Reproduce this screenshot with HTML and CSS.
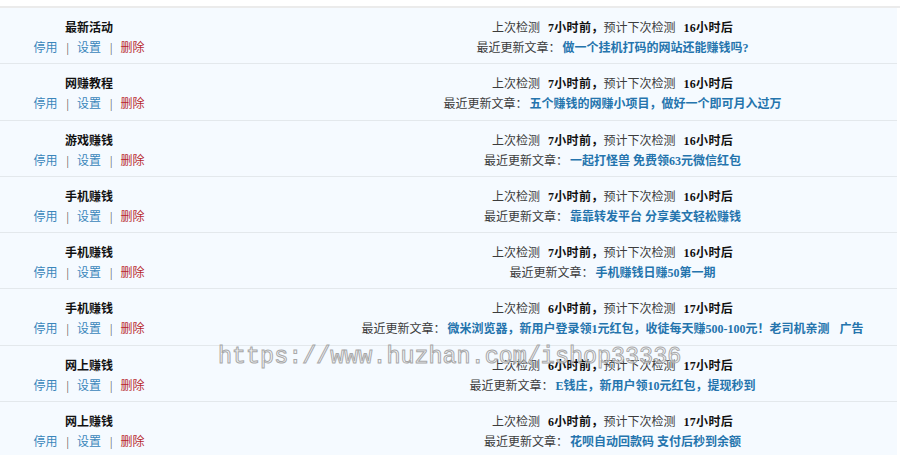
FILE: index.html
```html
<!DOCTYPE html>
<html lang="zh-CN">
<head>
  <meta charset="UTF-8">
  <title>采集规则列表</title>
  <link rel="stylesheet" href="styles.css">
</head>
<body>

<div class="list">
  <div class="row">
    <div class="name">
      <div class="title">最新活动</div>
      <div class="ops"><a class="op">停用</a><span class="sep">|</span><a class="op">设置</a><span class="sep">|</span><a class="op del">删除</a></div>
    </div>
    <div class="status">
      <div><span class="lbl">上次检测</span><b>7小时前，</b><span class="lbl">预计下次检测</span><b>16小时后</b></div>
      <div><span class="lbl">最近更新文章：</span><a class="art">做一个挂机打码的网站还能赚钱吗?</a></div>
    </div>
  </div>

  <div class="row">
    <div class="name">
      <div class="title">网赚教程</div>
      <div class="ops"><a class="op">停用</a><span class="sep">|</span><a class="op">设置</a><span class="sep">|</span><a class="op del">删除</a></div>
    </div>
    <div class="status">
      <div><span class="lbl">上次检测</span><b>7小时前，</b><span class="lbl">预计下次检测</span><b>16小时后</b></div>
      <div><span class="lbl">最近更新文章：</span><a class="art">五个赚钱的网赚小项目，做好一个即可月入过万</a></div>
    </div>
  </div>

  <div class="row">
    <div class="name">
      <div class="title">游戏赚钱</div>
      <div class="ops"><a class="op">停用</a><span class="sep">|</span><a class="op">设置</a><span class="sep">|</span><a class="op del">删除</a></div>
    </div>
    <div class="status">
      <div><span class="lbl">上次检测</span><b>7小时前，</b><span class="lbl">预计下次检测</span><b>16小时后</b></div>
      <div><span class="lbl">最近更新文章：</span><a class="art">一起打怪兽 免费领63元微信红包</a></div>
    </div>
  </div>

  <div class="row">
    <div class="name">
      <div class="title">手机赚钱</div>
      <div class="ops"><a class="op">停用</a><span class="sep">|</span><a class="op">设置</a><span class="sep">|</span><a class="op del">删除</a></div>
    </div>
    <div class="status">
      <div><span class="lbl">上次检测</span><b>7小时前，</b><span class="lbl">预计下次检测</span><b>16小时后</b></div>
      <div><span class="lbl">最近更新文章：</span><a class="art">靠靠转发平台 分享美文轻松赚钱</a></div>
    </div>
  </div>

  <div class="row">
    <div class="name">
      <div class="title">手机赚钱</div>
      <div class="ops"><a class="op">停用</a><span class="sep">|</span><a class="op">设置</a><span class="sep">|</span><a class="op del">删除</a></div>
    </div>
    <div class="status">
      <div><span class="lbl">上次检测</span><b>7小时前，</b><span class="lbl">预计下次检测</span><b>16小时后</b></div>
      <div><span class="lbl">最近更新文章：</span><a class="art">手机赚钱日赚50第一期</a></div>
    </div>
  </div>

  <div class="row">
    <div class="name">
      <div class="title">手机赚钱</div>
      <div class="ops"><a class="op">停用</a><span class="sep">|</span><a class="op">设置</a><span class="sep">|</span><a class="op del">删除</a></div>
    </div>
    <div class="status">
      <div><span class="lbl">上次检测</span><b>6小时前，</b><span class="lbl">预计下次检测</span><b>17小时后</b></div>
      <div><span class="lbl">最近更新文章：</span><a class="art">微米浏览器，新用户登录领1元红包，收徒每天赚500-100元！老司机亲测</a><a class="art ad">广告</a></div>
    </div>
  </div>

  <div class="row">
    <div class="name">
      <div class="title">网上赚钱</div>
      <div class="ops"><a class="op">停用</a><span class="sep">|</span><a class="op">设置</a><span class="sep">|</span><a class="op del">删除</a></div>
    </div>
    <div class="status">
      <div><span class="lbl">上次检测</span><b>6小时前，</b><span class="lbl">预计下次检测</span><b>17小时后</b></div>
      <div><span class="lbl">最近更新文章：</span><a class="art">E钱庄，新用户领10元红包，提现秒到</a></div>
    </div>
  </div>

  <div class="row">
    <div class="name">
      <div class="title">网上赚钱</div>
      <div class="ops"><a class="op">停用</a><span class="sep">|</span><a class="op">设置</a><span class="sep">|</span><a class="op del">删除</a></div>
    </div>
    <div class="status">
      <div><span class="lbl">上次检测</span><b>6小时前，</b><span class="lbl">预计下次检测</span><b>17小时后</b></div>
      <div><span class="lbl">最近更新文章：</span><a class="art">花呗自动回款码 支付后秒到余额</a></div>
    </div>
  </div>
</div>

<div class="watermark">https://www.huzhan.com/ishop33336</div>

</body>
</html>
```

FILE: styles.css
```css
body { margin: 0; background: #fff; font-family: "Liberation Serif", "Noto Sans CJK SC", serif; font-size: 12px; color: #222; }
.list { margin-top: 6px; border-top: 2px solid #ebebeb; }
.row { display: grid; grid-template-columns: 178px 1fr; min-height: 56.3px; box-sizing: border-box; padding: 10px 3px 5px 0; background: #f5faff; border-bottom: 1px solid #e3e8ec; margin-right: 3px; line-height: 20px; }
.name { text-align: center; }
.title { font-weight: bold; color: #111; }
.op { color: #3a86bb; }
.del { color: #b8282e; }
.sep { color: #555; margin: 0 8px 0 9px; }
.status { text-align: center; padding-left: 153px; }
.lbl { color: #3c3c3c; }
.status b { color: #111; margin-left: 8px; letter-spacing: 0.3px; }
.art { color: #2474ad; font-weight: bold; margin-left: 2px; }
.ad { margin-left: 10px; }
.watermark { position: absolute; left: 218px; top: 343px; font-family: "Liberation Mono", monospace; font-size: 23.4px; line-height: 28px; color: rgba(255,255,255,0.4); -webkit-text-stroke: 1px #a8a8a8; pointer-events: none; }
```
